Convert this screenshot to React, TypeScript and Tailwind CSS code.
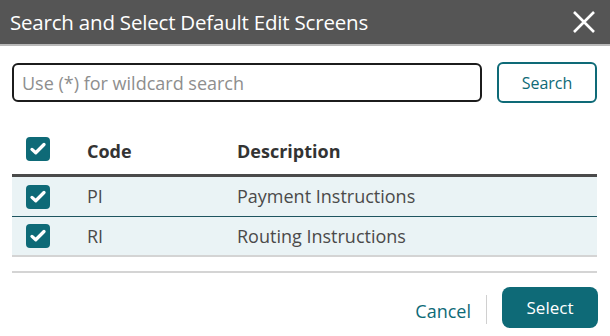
import { useState } from 'react'

type Row = { code: string; description: string }

const rows: Row[] = [
  { code: 'PI', description: 'Payment Instructions' },
  { code: 'RI', description: 'Routing Instructions' },
]

function CheckBox({ checked, onClick }: { checked: boolean; onClick: () => void }) {
  return (
    <button
      onClick={onClick}
      className={`w-6 h-6 rounded-[4px] flex items-center justify-center ${
        checked ? 'bg-[#0e6a77]' : 'bg-white border-2 border-[#0e6a77]'
      }`}
    >
      {checked && (
        <svg viewBox="0 0 24 24" className="w-[18px] h-[18px]" fill="none">
          <path
            d="M4 12.5l5 4.5 11-11"
            stroke="white"
            strokeWidth={4.4}
            strokeLinecap="round"
            strokeLinejoin="round"
          />
        </svg>
      )}
    </button>
  )
}

export default function App() {
  const [selected, setSelected] = useState<boolean[]>([true, true])
  const [query, setQuery] = useState('')

  const allChecked = selected.every(Boolean)

  return (
    <div className="w-[610px] h-[336px] bg-white font-['Open_Sans',sans-serif] overflow-hidden">
      {/* title bar */}
      <div className="h-[46px] bg-[#555555] border-b-2 border-[#b9b9b9] flex items-center justify-between pl-[10px] pr-[14px]">
        <h2 className="text-white text-[20.5px] tracking-[-0.2px]">Search and Select Default Edit Screens</h2>
        <button className="text-white">
          <svg viewBox="0 0 24 24" className="w-[24px] h-[24px]" fill="none">
            <path d="M2 2l20 20M22 2L2 22" stroke="white" strokeWidth={2.6} />
          </svg>
        </button>
      </div>

      {/* search row */}
      <div className="flex items-center gap-[15px] pl-[12px] pr-[13px] pt-[16px]">
        <input
          value={query}
          onChange={(e) => setQuery(e.target.value)}
          placeholder="Use (*) for wildcard search"
          className="flex-1 h-[39px] border-[2.5px] border-[#1c1c1c] rounded-[6px] px-[8px] text-[18px] text-[#333] placeholder:text-[#8e8e8e] outline-none"
        />
        <button className="w-[100px] h-[41px] border-2 border-[#0e6a77] rounded-[6px] text-[#0e6a77] text-[16px]">
          Search
        </button>
      </div>

      {/* table */}
      <div className="ml-[12px] mr-[13px] mt-[21px]">
        <div className="h-[53px] flex items-center border-b-[3px] border-[#4a4a4a]">
          <div className="w-[75px] pl-[14px] flex items-center">
            <CheckBox
              checked={allChecked}
              onClick={() => setSelected(selected.map(() => !allChecked))}
            />
          </div>
          <div className="w-[150px] text-[18px] font-bold text-[#333] pt-[4px]">Code</div>
          <div className="text-[18px] font-bold text-[#333] pt-[4px]">Description</div>
        </div>
        {rows.map((row, i) => (
          <div
            key={row.code}
            className={`flex items-center bg-[#eaf3f5] ${
              i === 0 ? 'h-[40px] border-b border-[#1e5560]' : 'h-[40px] border-b-2 border-[#d4d4d4]'
            }`}
          >
            <div className="w-[75px] pl-[14px] flex items-center">
              <CheckBox
                checked={selected[i]}
                onClick={() =>
                  setSelected(selected.map((v, j) => (j === i ? !v : v)))
                }
              />
            </div>
            <div className="w-[150px] text-[18px] text-[#4a4a4a]">{row.code}</div>
            <div className="text-[18px] text-[#4a4a4a]">{row.description}</div>
          </div>
        ))}
        <div className="h-[16px] border-b-2 border-[#d4d4d4]" />
      </div>

      {/* footer */}
      <div className="flex items-center justify-end pr-[12px] pt-[14px]">
        <button className="text-[#0e6a77] text-[18px] mt-[8px]">Cancel</button>
        <div className="w-px h-[29px] bg-[#d0d0d0] mx-[15px] mt-[4px]" />
        <button className="w-[96px] h-[41px] bg-[#0e6a77] rounded-[8px] text-white text-[17px]">
          Select
        </button>
      </div>
    </div>
  )
}
